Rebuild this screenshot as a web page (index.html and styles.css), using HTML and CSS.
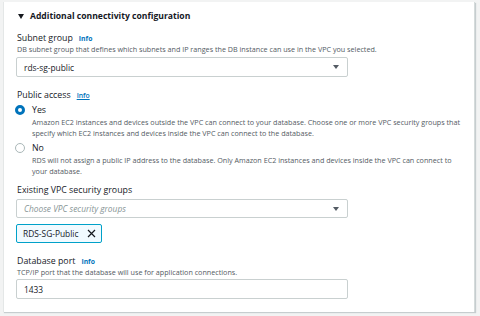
FILE: index.html
```html
<!DOCTYPE html>
<html>
<head>
<meta charset="utf-8">
<link rel="stylesheet" href="styles.css">
</head>
<body>
<div class="card">
  <div class="heading"><span class="caret"></span><span>Additional connectivity configuration</span></div>

  <div class="field f-subnet">
    <div class="label">Subnet group <span class="info">Info</span></div>
    <div class="desc">DB subnet group that defines which subnets and IP ranges the DB instance can use in the VPC you selected.</div>
    <div class="select"><span class="value">rds-sg-public</span><span class="arrow"></span></div>
  </div>

  <div class="field f-public">
    <div class="label">Public access <span class="info u">Info</span></div>
    <div class="radio-row r-yes"><span class="radio on"></span><span class="rlabel">Yes</span></div>
    <div class="rdesc">Amazon EC2 instances and devices outside the VPC can connect to your database. Choose one or more VPC security groups that specify which EC2 instances and devices inside the VPC can connect to the database.</div>
    <div class="radio-row r-no"><span class="radio"></span><span class="rlabel">No</span></div>
    <div class="rdesc">RDS will not assign a public IP address to the database. Only Amazon EC2 instances and devices inside the VPC can connect to your database.</div>
  </div>

  <div class="field f-vpc">
    <div class="label">Existing VPC security groups</div>
    <div class="select s-vpc"><span class="placeholder">Choose VPC security groups</span><span class="arrow"></span></div>
    <div class="token"><span>RDS-SG-Public</span>
      <svg class="x" width="9" height="9" viewBox="0 0 9 9"><path d="M1 1L8 8M8 1L1 8" stroke="#16191f" stroke-width="1.2" fill="none"/></svg>
    </div>
  </div>

  <div class="field f-port">
    <div class="label">Database port <span class="info">Info</span></div>
    <div class="desc">TCP/IP port that the database will use for application connections.</div>
    <div class="input"><span class="value">1433</span></div>
  </div>
</div>
</body>
</html>
```

FILE: styles.css
```css
html, body {
  margin: 0;
  padding: 0;
}
body {
  background: #f2f3f3;
  width: 480px;
  height: 316px;
  overflow: hidden;
  font-family: "Open Sans", "Liberation Sans", sans-serif;
  color: #16191f;
}
.card {
  margin: 2px 5px 0 3px;
  height: 303px;
  background: #fff;
  border-left: 1px solid #e4e7e7;
  border-right: 1px solid #d5dbdb;
  box-shadow: 1px 1px 1px rgba(0, 33, 43, 0.18);
  padding: 7px 0 0 13px;
}
.heading {
  display: flex;
  align-items: center;
  height: 14px;
  font-size: 8.6px;
  font-weight: 700;
  gap: 6px;
}
.caret {
  width: 0;
  height: 0;
  border-left: 3px solid transparent;
  border-right: 3px solid transparent;
  border-top: 5px solid #16191f;
  margin-left: 1px;
}
.field { display: flex; flex-direction: column; }
.f-subnet { margin-top: 9px; }
.f-public { margin-top: 12px; }
.f-vpc { margin-top: 8px; }
.f-port { margin-top: 12px; }
.label {
  font-size: 8.8px;
  line-height: 12px;
  height: 12px;
  display: flex;
  align-items: baseline;
  gap: 6px;
}
.info {
  color: #0073bb;
  font-weight: 700;
  font-size: 6.8px;
}
.info.u { text-decoration: underline; font-weight: 600; }
.desc {
  font-size: 7.2px;
  line-height: 10px;
  color: #545b64;
  white-space: nowrap;
}
.select, .input {
  box-sizing: border-box;
  width: 332px;
  height: 20px;
  margin-top: 3px;
  margin-left: -1px;
  border: 1px solid #c9d0d0;
  border-radius: 2px;
  display: flex;
  align-items: center;
  justify-content: space-between;
  padding: 0 8px 0 7px;
  font-size: 8.4px;
}
.s-vpc { height: 19px; margin-top: 3px; }
.input { margin-top: 2px; justify-content: flex-start; }
.placeholder { color: #879596; font-style: italic; }
.arrow {
  width: 0;
  height: 0;
  border-left: 3px solid transparent;
  border-right: 3px solid transparent;
  border-top: 4.5px solid #545b64;
}
.radio-row {
  display: flex;
  align-items: center;
  height: 12px;
  gap: 7px;
}
.r-yes { margin-top: 3px; }
.r-no { margin-top: 4px; }
.radio {
  box-sizing: border-box;
  width: 10px;
  height: 10px;
  border-radius: 50%;
  border: 1px solid #aab7b8;
  margin-left: -2px;
}
.radio.on { border: 3px solid #0073bb; }
.rlabel { font-size: 8.8px; }
.rdesc {
  margin-top: 1px;
  padding-left: 15px;
  padding-right: 10px;
  font-size: 7.2px;
  line-height: 10.5px;
  color: #545b64;
}
.token {
  box-sizing: border-box;
  align-self: flex-start;
  margin-top: 6px;
  margin-left: -1px;
  height: 19px;
  width: 86px;
  display: flex;
  align-items: center;
  justify-content: space-between;
  padding: 0 5px 0 6px;
  background: #f1faff;
  border: 1px solid #00a1c9;
  border-radius: 2px;
  font-size: 8.4px;
}
```
